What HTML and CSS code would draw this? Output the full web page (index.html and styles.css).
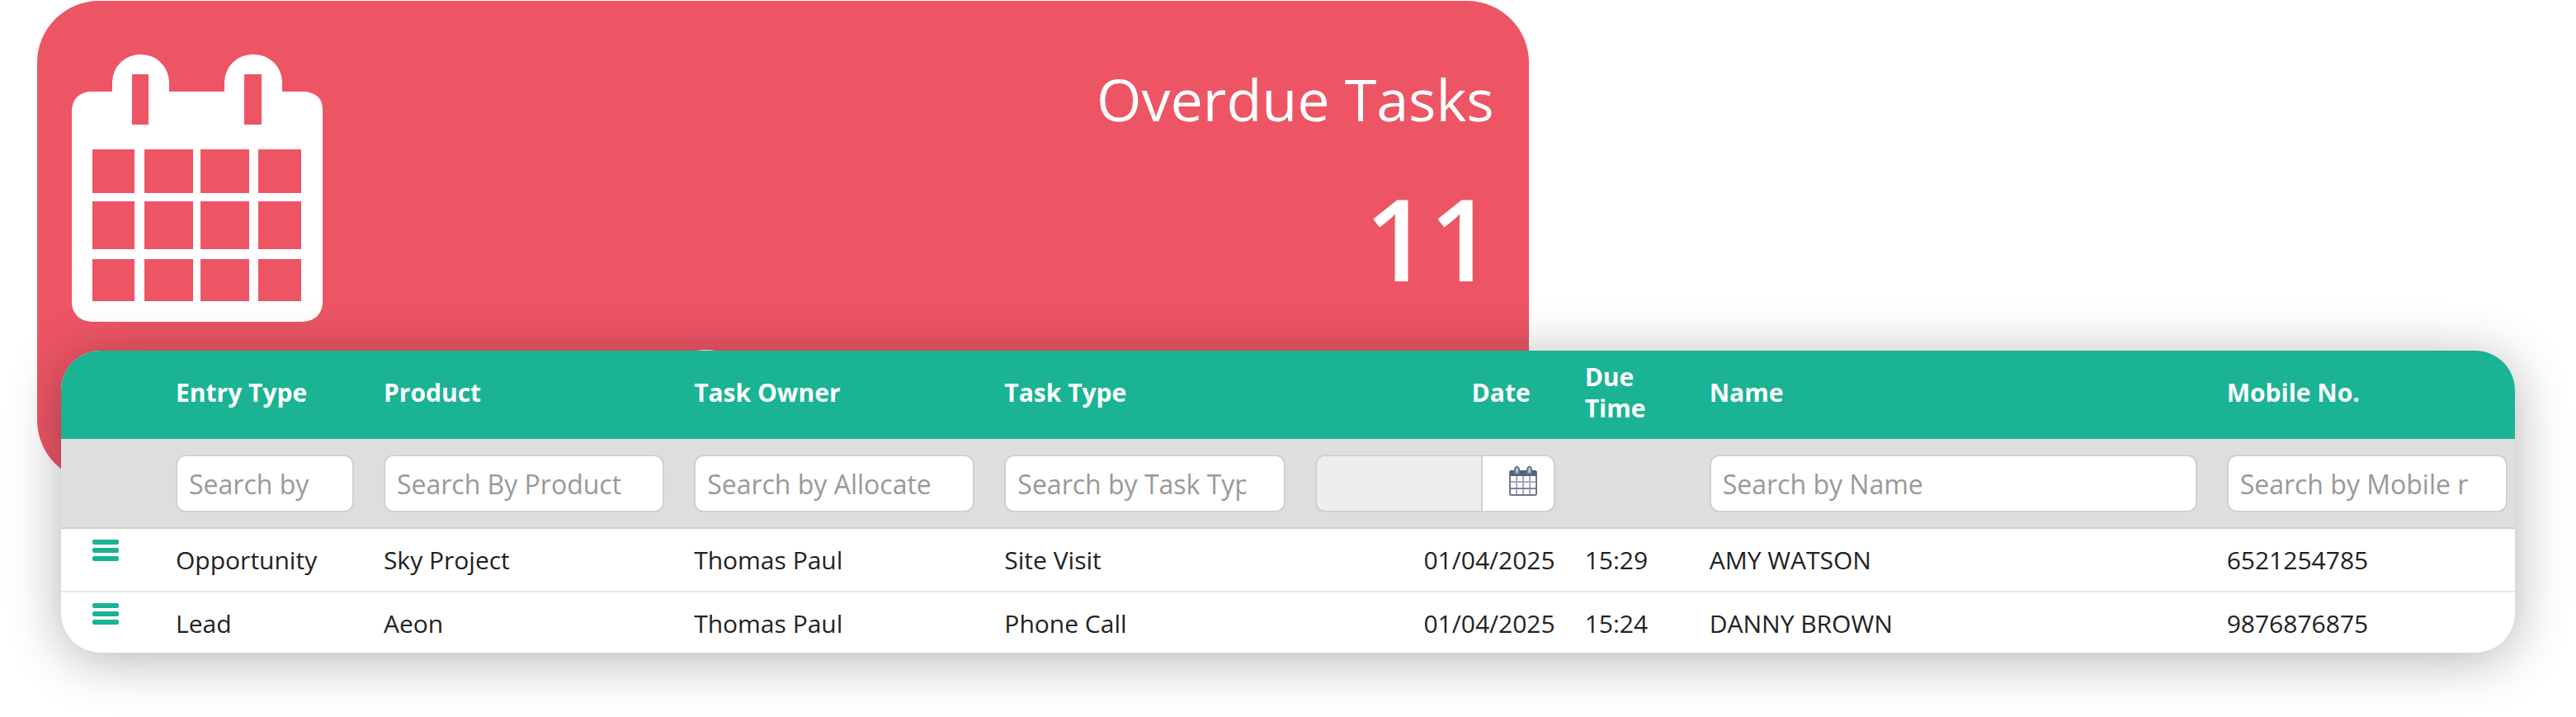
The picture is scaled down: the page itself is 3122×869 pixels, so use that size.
FILE: index.html
```
<!DOCTYPE html>
<html lang="en">
<head>
    <meta charset="UTF-8">
    <title>Overdue Tasks</title>
    <link rel="stylesheet" href="styles.css">
</head>
<body>
    <!-- Summary card -->
    <section class="card">
        <svg class="card-icon" viewBox="0 0 304 324" aria-hidden="true">
            <path fill="#fff" fill-rule="evenodd" d="M22 45H49V34A34 34 0 0 1 84 0A34 34 0 0 1 118 34V45H185V34A34 34 0 0 1 220 0A34 34 0 0 1 255 34V45H282Q304 47 304 67V302Q302 322 280 324H24Q2 322 0 302V67Q2 47 22 45ZM73 24V85H93V24ZM209 24V85H230V24ZM25 115V168H76V115ZM88 115V168H147V115ZM156 115V168H215V115ZM226 115V168H278V115ZM25 178V236H76V178ZM88 178V236H147V178ZM156 178V236H215V178ZM226 178V236H278V178ZM25 248V299H76V248ZM88 248V299H147V248ZM156 248V299H215V248ZM226 248V299H278V248Z"/>
        </svg>
        <div class="card-text">
            <h2 class="card-title">Overdue Tasks</h2>
            <div class="card-count">11</div>
        </div>
        <svg class="card-more" viewBox="0 0 120 120" aria-hidden="true">
            <circle cx="60" cy="60" r="54" fill="none" stroke="#fff" stroke-width="12"/>
        </svg>
    </section>

    <!-- Task list -->
    <div class="table-box">
        <table class="tasks">
            <colgroup>
                <col class="col-menu">
                <col class="col-entry">
                <col class="col-mid">
                <col class="col-mid">
                <col class="col-mid">
                <col class="col-date">
                <col class="col-time">
                <col class="col-name">
                <col class="col-mobile">
            </colgroup>
            <thead>
                <tr>
                    <th></th>
                    <th>Entry Type</th>
                    <th>Product</th>
                    <th>Task Owner</th>
                    <th>Task Type</th>
                    <th class="date">Date</th>
                    <th>Due Time</th>
                    <th>Name</th>
                    <th>Mobile No.</th>
                </tr>
                <tr class="filters">
                    <td></td>
                    <td><input class="field" type="text" placeholder="Search by" aria-label="Entry Type"></td>
                    <td><input class="field" type="text" placeholder="Search By Product" aria-label="Product"></td>
                    <td><input class="field" type="text" placeholder="Search by Allocate" aria-label="Task Owner"></td>
                    <td><input class="field" type="text" placeholder="Search by Task Type" aria-label="Task Type"></td>
                    <td>
                        <div class="date-group">
                            <input class="date-field" type="text" readonly aria-label="Date">
                            <button class="date-btn" type="button" aria-label="Choose date">
                                <svg class="date-icon" viewBox="0 0 34 37" aria-hidden="true">
                                    <rect x="1" y="7" width="32" height="29" rx="2" fill="#fff" stroke="#6b7a90" stroke-width="2"/>
                                    <path fill="#52637c" d="M1 6H33V13H1Z"/>
                                    <path fill="none" stroke="#a3adba" stroke-width="2" d="M9 13V35M17 13V35M25 13V35M2 20H32"/>
                                    <path fill="none" stroke="#7d8a9d" stroke-width="2" d="M2 28H32"/>
                                    <path fill="#b5bdc8" stroke="#6b7a90" stroke-width="2" d="M7 10V4Q9 -1 12 4V10ZM22 10V4Q25 -1 27 4V10Z"/>
                                </svg>
                            </button>
                        </div>
                    </td>
                    <td></td>
                    <td><input class="field" type="text" placeholder="Search by Name" aria-label="Name"></td>
                    <td class="last"><input class="field" type="text" placeholder="Search by Mobile no" aria-label="Mobile No."></td>
                </tr>
            </thead>
            <tbody>
                <tr>
                    <td><button class="menu-btn" type="button" aria-label="Actions"><span></span><span></span><span></span></button></td>
                    <td>Opportunity</td>
                    <td>Sky Project</td>
                    <td>Thomas Paul</td>
                    <td>Site Visit</td>
                    <td class="date">01/04/2025</td>
                    <td>15:29</td>
                    <td>AMY WATSON</td>
                    <td>6521254785</td>
                </tr>
                <tr>
                    <td><button class="menu-btn" type="button" aria-label="Actions"><span></span><span></span><span></span></button></td>
                    <td>Lead</td>
                    <td>Aeon</td>
                    <td>Thomas Paul</td>
                    <td>Phone Call</td>
                    <td class="date">01/04/2025</td>
                    <td>15:24</td>
                    <td>DANNY BROWN</td>
                    <td>9876876875</td>
                </tr>
            </tbody>
        </table>
    </div>
</body>
</html>
```
FILE: styles.css
```
* { margin: 0; padding: 0; box-sizing: border-box; }

body {
    background: #fff;
    color: #222;
    font-family: "Open Sans", "Noto Sans", sans-serif;
    font-size: 30px;
    line-height: 38px;
    padding: 1px 0 76px;
}

/* Red summary card */
.card {
    display: grid;
    grid-template-columns: auto 1fr;
    grid-template-rows: 358px auto;
    width: 57.9%;
    height: 583px;
    margin-left: 45px;
    padding: 65px 42px 0;
    border-radius: 75px;
    background: #ed5565;
    color: #fff;
}

.card-icon {
    width: 304px;
    height: 324px;
}

.card-text {
    text-align: right;
}

.card-title {
    font-size: 70px;
    font-weight: 400;
    line-height: 108px;
}

.card-count {
    margin-top: 44px;
    font-size: 137px;
    font-weight: 600;
    line-height: 140px;
}

.card-more {
    grid-column: 1 / -1;
    justify-self: center;
    width: 120px;
    height: 120px;
    margin-right: 188px;
}

/* Table lies over the lower part of the card */
.table-box {
    position: relative;
    margin: -159px 74px 0;
    border-radius: 48px;
    overflow: hidden;
    background: #fff;
    box-shadow: 0 8px 64px rgba(0, 0, 0, 0.3);
}

.tasks {
    width: 100%;
    table-layout: fixed;
    border-collapse: collapse;
}

.col-menu { width: 4.07%; }
.col-entry { width: 8.47%; }
.col-mid { width: 12.65%; }
.col-date { width: 11%; }
.col-time { width: 5.08%; }
.col-name { width: 21.08%; }
.col-mobile { width: 12.35%; }

th {
    height: 107px;
    padding: 0 18px 6px;
    background: #1ab394;
    color: #fff;
    font-weight: 700;
    text-align: left;
    vertical-align: middle;
}

td {
    height: 77px;
    padding: 19px 18px 0;
    vertical-align: top;
}

.date { text-align: right; }
th.date { padding-right: 48px; }

tbody tr + tr td {
    height: 74px;
    border-top: 2px solid #e7e7e7;
}

/* Filter row */
.filters td {
    height: 108px;
    padding: 0 18px;
    background: #dedede;
    border-bottom: 2px solid #cdcdcd;
    vertical-align: middle;
}

.filters .last { padding-right: 9px; }

.field {
    display: block;
    width: 100%;
    height: 70px;
    padding: 2px 46px 0 14px;
    border: 2px solid #d0d0d0;
    border-radius: 12px;
    background: #fff;
    font-family: inherit;
    font-size: 32px;
}

.field::placeholder { color: #999; }

.date-group {
    display: flex;
    height: 70px;
    border: 2px solid #d0d0d0;
    border-radius: 12px;
    overflow: hidden;
}

.date-field {
    flex: 1;
    min-width: 0;
    border: 0;
    background: #eee;
}

.date-btn {
    width: 88px;
    padding: 0 0 4px 12px;
    border: 0;
    border-left: 2px solid #d0d0d0;
    background: #fff;
}

.date-icon {
    width: 34px;
    height: 37px;
}

/* Row menu */
.menu-btn {
    display: flex;
    flex-direction: column;
    gap: 4px;
    width: 32px;
    margin: -6px 0 0 20px;
    border: 0;
    background: none;
}

.menu-btn span {
    width: 100%;
    height: 6px;
    border-radius: 2px;
    background: #1ab394;
}
```
